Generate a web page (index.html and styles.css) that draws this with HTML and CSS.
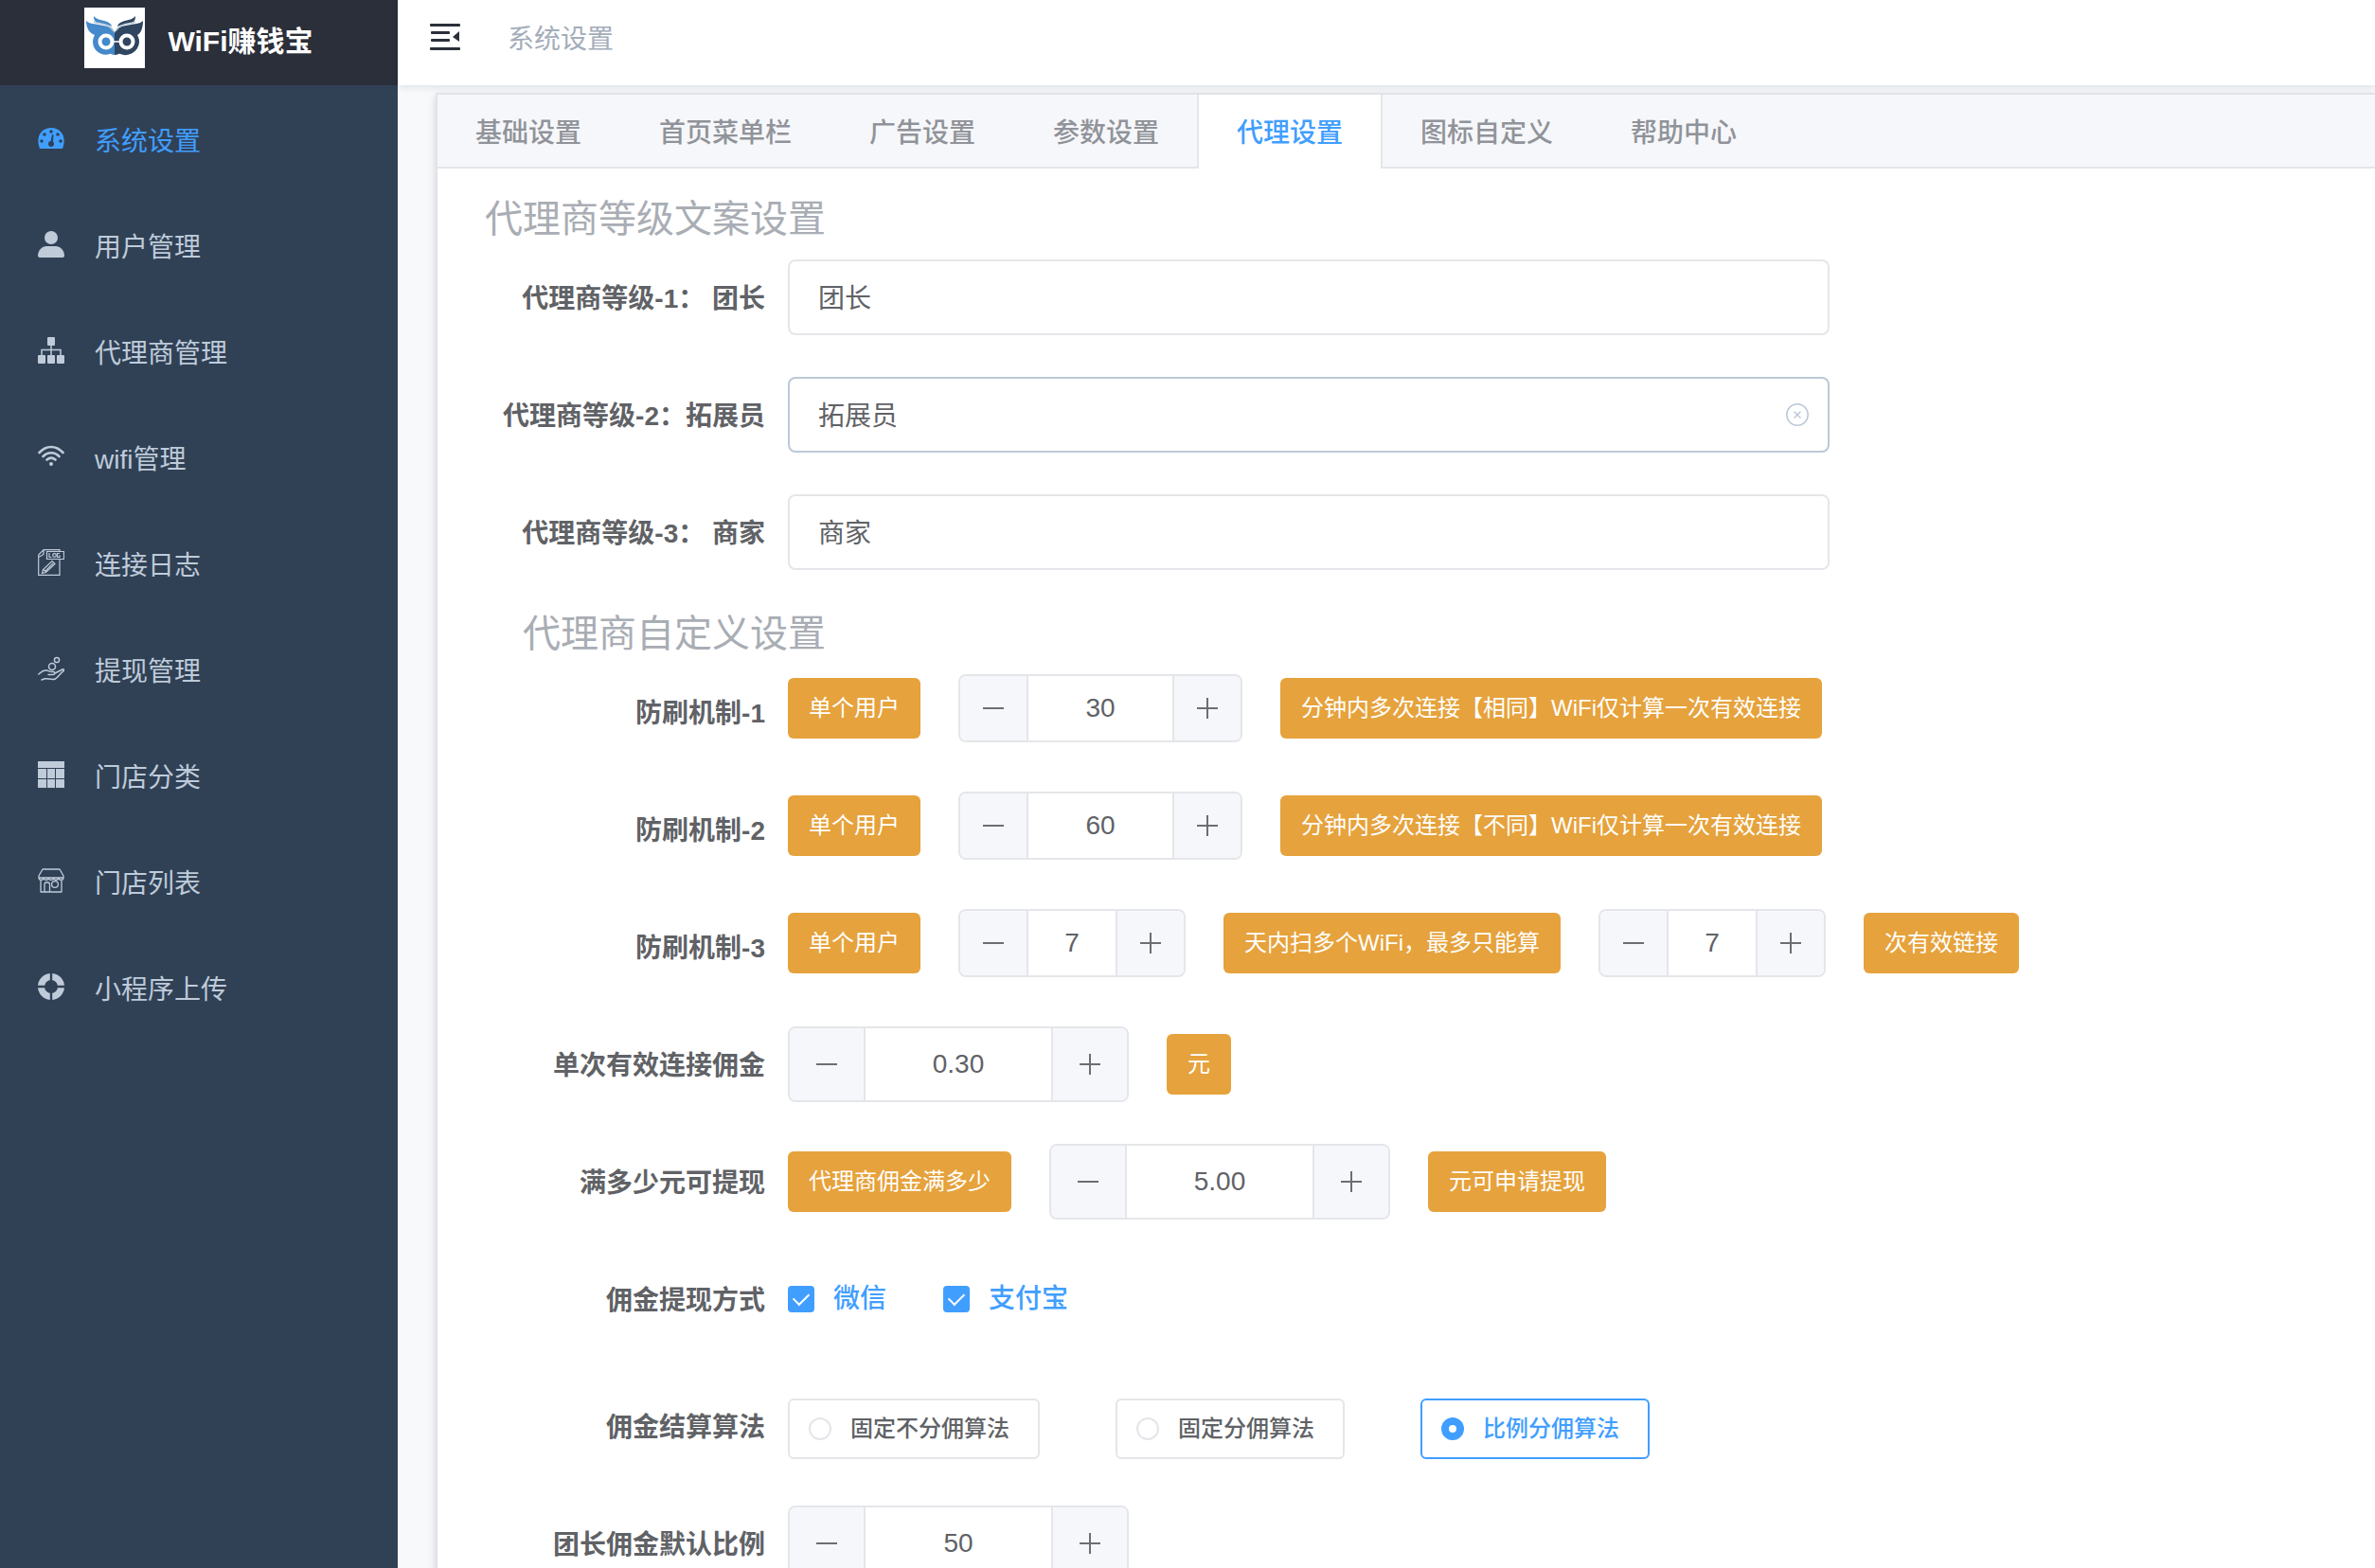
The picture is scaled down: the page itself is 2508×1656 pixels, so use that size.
FILE: index.html
```html
<!DOCTYPE html>
<html lang="zh-CN">
<head>
<meta charset="utf-8">
<meta name="viewport" content="width=device-width, initial-scale=1">
<title>WiFi赚钱宝 - 系统设置</title>
<link rel="stylesheet" href="styles.css">
</head>
<body>
<div class="app">
  <aside class="sidebar">
    <div class="brand">
      <svg class="brand-logo" viewBox="0 0 64 64" aria-hidden="true">
        <rect width="64" height="64" fill="#fff"/>
        <path fill="#4489cb" d="M10 9c3 4 9 4 14 6 3 1 5 3 5 5-5-3-12-2-17-5-2-2-2-4-2-6z"/>
        <path fill="#4489cb" d="M2 14c4 4 11 3 18 5 7 1 11 4 12 8v23c-3 0-4-2-5-1-8 3-18-3-18-13 0-3 1-5 2-7C5 27 2 21 2 14z"/>
        <path fill="#2f4560" d="M54 9c-3 4-9 4-14 6-3 1-5 3-5 5 5-3 12-2 17-5 2-2 2-4 2-6z"/>
        <path fill="#2f4560" d="M62 14c-4 4-11 3-18 5-7 1-11 4-12 8v23c4 0 4-2 6-1 9 4 20-3 20-13 0-3-1-5-2-7 4-2 6-8 6-15z"/>
        <path fill="none" stroke="#b9c6d4" stroke-width="1.5" d="M10 15c7 3 16 1 21 10M54 15c-7 3-16 1-21 10"/>
        <circle cx="23" cy="36" r="6.500" fill="#4489cb" stroke="#fff" stroke-width="4"/>
        <circle cx="45" cy="36" r="6.500" fill="#2f4560" stroke="#fff" stroke-width="4"/>
        <path d="M31 36h6" stroke="#fff" stroke-width="1.500"/>
      </svg>
      <span class="brand-name">WiFi赚钱宝</span>
    </div>
    <nav class="menu">
      <a class="menu-item active" href="#">
        <svg class="icon" viewBox="0 0 28 28" aria-hidden="true"><path fill="currentColor" d="M2 25C-3 12 4 3 14 3s17 9 12 22z"/><g fill="#304156"><circle cx="4" cy="17" r="1.800"/><circle cx="7" cy="10" r="1.800"/><circle cx="14" cy="7" r="1.800"/><circle cx="21" cy="10" r="1.800"/><circle cx="24" cy="17" r="1.800"/><circle cx="14" cy="20" r="3"/><path d="M13 20l2-10 1.500.4-.7 10z"/></g></svg>
        <span class="menu-text">系统设置</span></a>
      <a class="menu-item" href="#">
        <svg class="icon" viewBox="0 0 28 28" fill="currentColor" aria-hidden="true"><circle cx="14" cy="7" r="7"/><path d="M0 26c0-6 5-10 9-10h10c4 0 9 4 9 10q0 2-2 2H2q-2 0-2-2z"/></svg>
        <span class="menu-text">用户管理</span></a>
      <a class="menu-item" href="#">
        <svg class="icon" viewBox="0 0 28 28" fill="currentColor" aria-hidden="true"><rect x="10" width="8" height="9" rx="1"/><rect y="19" width="8" height="9" rx="1"/><rect x="10" y="19" width="8" height="9" rx="1"/><rect x="20" y="19" width="8" height="9" rx="1"/><path fill="none" stroke="currentColor" stroke-width="1.500" d="M14 9v10M4 19v-5.500h20V19"/></svg>
        <span class="menu-text">代理商管理</span></a>
      <a class="menu-item" href="#">
        <svg class="icon" viewBox="0 0 28 28" fill="none" stroke="currentColor" stroke-width="2.600" stroke-linecap="round" aria-hidden="true"><path d="M1.500 10C9 2 19 2 26.500 10M5.500 14c5-5 12-5 17 0M9.500 17.500c3-2.500 6-2.500 9 0"/><circle cx="14" cy="22" r="2" fill="currentColor" stroke="none"/></svg>
        <span class="menu-text">wifi管理</span></a>
      <a class="menu-item" href="#">
        <svg class="icon" viewBox="0 0 28 28" fill="none" stroke="currentColor" stroke-width="1.200" aria-hidden="true"><path d="M23 11v16.300H.7V6L6 .7h17V2M.7 8.500L6 5.500V.7M9.500 2.500h18v8h-18zM12 4v4.500h2.500M23 4.500h-2.500v4H23V7h-1"/><circle cx="17.500" cy="6.500" r="1.800"/><path d="M4.500 25.500l1-4L15 12.500l3 3-9.500 9zM6 21.500l3 3M8 23l8-8"/></svg>
        <span class="menu-text">连接日志</span></a>
      <a class="menu-item" href="#">
        <svg class="icon" viewBox="0 0 28 28" fill="none" stroke="currentColor" stroke-width="1.500" stroke-linecap="round" stroke-linejoin="round" aria-hidden="true"><circle cx="20" cy="5" r="2.600"/><circle cx="15" cy="12" r="3.500"/><path d="M.8 20C4 17 6 15.500 9 16c3 .5 4 2 7.500 1.500 2 0 2 3-.5 3h-5M18 19l8-4c1.500-.5 2 .8 1 1.600-3 2.400-5 5.400-8.500 8.400-4 1.500-8-.8-11-.3L4 26"/></svg>
        <span class="menu-text">提现管理</span></a>
      <a class="menu-item" href="#">
        <svg class="icon" viewBox="0 0 28 28" fill="currentColor" aria-hidden="true"><path d="M0 0h28v7H0zM0 8h9v10H0zM10 8h8v10h-8zM19 8h9v10h-9zM0 19h9v9H0zM10 19h8v9h-8zM19 19h9v9h-9z"/></svg>
        <span class="menu-text">门店分类</span></a>
      <a class="menu-item" href="#">
        <svg class="icon" viewBox="0 0 28 28" fill="none" stroke="currentColor" stroke-width="1.300" stroke-linejoin="round" aria-hidden="true"><path d="M5 2h18l4 7v2H1V9zM1 11c0 3 5 3 5.200 0 .2 3 5 3 5.200 0 .2 3 5 3 5.200 0 .2 3 5 3 5.200 0 .2 3 5.200 3 5.200 0M3 13v13h22V13M7 26v-8c0-3 5.500-3 5.500 0v8"/><circle cx="18" cy="18" r="3.400"/></svg>
        <span class="menu-text">门店列表</span></a>
      <a class="menu-item" href="#">
        <svg class="icon" viewBox="0 0 28 28" fill="none" stroke="currentColor" aria-hidden="true"><circle cx="14" cy="14" r="10.500" stroke-width="7"/><path stroke="#304156" stroke-width="2.400" d="M14 0v28M0 14h28"/></svg>
        <span class="menu-text">小程序上传</span></a>
    </nav>
  </aside>

  <div class="page">
    <header class="topbar">
      <button class="collapse" type="button" aria-label="收起菜单">
        <svg class="collapse-icon" viewBox="0 0 32 28" fill="#2b2f3a" aria-hidden="true"><rect width="32" height="3" rx="1"/><rect x="1" y="8" width="20" height="3" rx="1"/><rect x="1" y="16" width="20" height="3" rx="1"/><rect y="25" width="32" height="3" rx="1"/><path d="M24 14l7-6v11z"/></svg>
      </button>
      <span class="crumb">系统设置</span>
    </header>

    <main class="main">
      <section class="card">
        <nav class="tabs">
          <a class="tab" href="#">基础设置</a>
          <a class="tab" href="#">首页菜单栏</a>
          <a class="tab" href="#">广告设置</a>
          <a class="tab" href="#">参数设置</a>
          <a class="tab active" href="#">代理设置</a>
          <a class="tab" href="#">图标自定义</a>
          <a class="tab" href="#">帮助中心</a>
        </nav>

        <form class="form">
          <h2 class="section-title">代理商等级文案设置</h2>
          <div class="row">
            <label class="label" for="level1">代理商等级-1： 团长</label>
            <div class="text-field"><input id="level1" type="text" value="团长"></div>
          </div>
          <div class="row">
            <label class="label" for="level2">代理商等级-2：拓展员</label>
            <div class="text-field hover"><input id="level2" type="text" value="拓展员">
              <button class="clear" type="button" aria-label="清空"><svg class="clear-icon" viewBox="0 0 24 24" fill="none" stroke="currentColor" stroke-width="1.500" aria-hidden="true"><circle cx="12" cy="12" r="11.200"/><path d="M8.500 8.500l7 7M15.500 8.500l-7 7"/></svg></button></div>
          </div>
          <div class="row last">
            <label class="label" for="level3">代理商等级-3： 商家</label>
            <div class="text-field"><input id="level3" type="text" value="商家"></div>
          </div>

          <h2 class="section-title">代理商自定义设置</h2>
          <div class="row">
            <label class="label" for="guard1">防刷机制-1</label>
            <div class="controls compact">
              <button class="tag" type="button">单个用户</button>
              <div class="stepper small"><button type="button" aria-label="减少"><i class="minus"></i></button><input id="guard1" type="text" value="30"><button type="button" aria-label="增加"><i class="plus"></i></button></div>
              <button class="tag" type="button">分钟内多次连接【相同】WiFi仅计算一次有效连接</button>
            </div>
          </div>
          <div class="row">
            <label class="label" for="guard2">防刷机制-2</label>
            <div class="controls compact">
              <button class="tag" type="button">单个用户</button>
              <div class="stepper small"><button type="button" aria-label="减少"><i class="minus"></i></button><input id="guard2" type="text" value="60"><button type="button" aria-label="增加"><i class="plus"></i></button></div>
              <button class="tag" type="button">分钟内多次连接【不同】WiFi仅计算一次有效连接</button>
            </div>
          </div>
          <div class="row">
            <label class="label" for="guard3">防刷机制-3</label>
            <div class="controls compact">
              <button class="tag" type="button">单个用户</button>
              <div class="stepper small narrow"><button type="button" aria-label="减少"><i class="minus"></i></button><input id="guard3" type="text" value="7"><button type="button" aria-label="增加"><i class="plus"></i></button></div>
              <button class="tag" type="button">天内扫多个WiFi，最多只能算</button>
              <div class="stepper small narrow"><button type="button" aria-label="减少"><i class="minus"></i></button><input type="text" value="7" aria-label="有效链接次数"><button type="button" aria-label="增加"><i class="plus"></i></button></div>
              <button class="tag" type="button">次有效链接</button>
            </div>
          </div>
          <div class="row">
            <label class="label" for="commission">单次有效连接佣金</label>
            <div class="controls">
              <div class="stepper"><button type="button" aria-label="减少"><i class="minus"></i></button><input id="commission" type="text" value="0.30"><button type="button" aria-label="增加"><i class="plus"></i></button></div>
              <button class="tag" type="button">元</button>
            </div>
          </div>
          <div class="row">
            <label class="label" for="threshold">满多少元可提现</label>
            <div class="controls">
              <button class="tag" type="button">代理商佣金满多少</button>
              <div class="stepper"><button type="button" aria-label="减少"><i class="minus"></i></button><input id="threshold" type="text" value="5.00"><button type="button" aria-label="增加"><i class="plus"></i></button></div>
              <button class="tag" type="button">元可申请提现</button>
            </div>
          </div>
          <div class="row checks-row" role="group" aria-labelledby="methods">
            <span class="label" id="methods">佣金提现方式</span>
            <div class="controls checks">
              <label class="check"><input type="checkbox" checked>微信</label>
              <label class="check"><input type="checkbox" checked>支付宝</label>
            </div>
          </div>
          <div class="row" role="radiogroup" aria-labelledby="algorithm">
            <span class="label" id="algorithm">佣金结算算法</span>
            <div class="controls radios">
              <label class="radio"><input type="radio" name="algorithm">固定不分佣算法</label>
              <label class="radio"><input type="radio" name="algorithm">固定分佣算法</label>
              <label class="radio"><input type="radio" name="algorithm" checked>比例分佣算法</label>
            </div>
          </div>
          <div class="row">
            <label class="label" for="ratio">团长佣金默认比例</label>
            <div class="controls">
              <div class="stepper"><button type="button" aria-label="减少"><i class="minus"></i></button><input id="ratio" type="text" value="50"><button type="button" aria-label="增加"><i class="plus"></i></button></div>
            </div>
          </div>
        </form>
      </section>
    </main>
  </div>
</div>
</body>
</html>
```
FILE: styles.css
```css
* { box-sizing: border-box; }

body {
  margin: 0;
  font: 28px/1.4 "Liberation Sans", "Noto Sans CJK SC", sans-serif;
  color: #606266;
  background: #f7f9fb;
}

button, input { font: inherit; color: inherit; margin: 0; }
button { cursor: pointer; }
a { color: inherit; text-decoration: none; }
svg { display: block; }

.app { display: flex; height: 100vh; }

/* sidebar */
.sidebar { flex: none; width: 420px; background: #304156; color: #bfcbd9; }
.brand {
  display: flex;
  justify-content: center;
  gap: 24px;
  height: 90px;
  padding-top: 8px;
  background: #2b2f3a;
}
.brand-logo { width: 64px; height: 64px; }
.brand-name { color: #fff; font-size: 30px; font-weight: 700; line-height: 72px; }
.menu { padding-top: 2px; }
.menu-item { display: flex; align-items: center; gap: 32px; height: 112px; padding: 0 40px; }
.menu-item.active { color: #409eff; }
.menu-text { padding-top: 4px; }
.icon { width: 28px; height: 28px; margin-bottom: 4px; flex: none; }

/* top bar */
.page { flex: 1; min-width: 0; display: flex; flex-direction: column; }
.topbar {
  position: relative;
  z-index: 1;
  flex: none;
  display: flex;
  gap: 50px;
  height: 90px;
  padding: 0 34px;
  background: #fff;
  box-shadow: 0 2px 8px rgba(0, 21, 41, .1);
}
.collapse { height: 78px; padding: 0; border: 0; background: none; }
.collapse-icon { width: 32px; height: 28px; }
.crumb { line-height: 84px; color: #a4adba; }

/* card with tabs */
.main { flex: 1; min-height: 0; overflow: auto; scrollbar-width: none; padding: 8px 0 0 40px; }
.card {
  background: #fff;
  border: 2px solid #e1e3e6;
  border-right: 0;
  box-shadow: 0 4px 8px rgba(0, 0, 0, .12), 0 0 12px rgba(0, 0, 0, .04);
}
.tabs { display: flex; background: #f6f7fa; border-bottom: 2px solid #e4e6e9; }
.tab {
  height: 78px;
  margin-bottom: -2px;
  padding: 0 40px;
  border-right: 2px solid transparent;
  line-height: 82px;
  font-weight: 500;
  color: #909399;
}
.tab.active {
  margin-left: -2px;
  border-left: 2px solid #e4e6e9;
  border-right-color: #e4e6e9;
  background: #fff;
  color: #409eff;
}

/* form */
.form { padding: 10px 50px 40px; }
.section-title {
  width: 360px;
  margin: 0;
  line-height: 86px;
  font-size: 40px;
  font-weight: 400;
  color: #a9adb4;
  text-align: right;
}
.row { display: flex; gap: 24px; margin-bottom: 44px; min-height: 80px; }
.row.last { margin-bottom: 24px; }
.checks-row { min-height: 90px; }
.label { flex: none; width: 296px; height: 80px; line-height: 84px; font-weight: 700; text-align: right; white-space: nowrap; }

.text-field {
  display: flex;
  align-items: center;
  flex: 0 1 1100px;
  height: 80px;
  padding: 0 20px 0 30px;
  border: 2px solid #e4e6e9;
  border-radius: 8px;
  background: #fff;
}
.text-field.hover { border-color: #bcc8d6; }
.text-field input { flex: 1; min-width: 0; height: 76px; padding: 0 0 2px; border: 0; outline: 0; background: none; }
.clear { padding: 0; border: 0; background: none; color: #bcc8d6; }
.clear-icon { width: 24px; height: 24px; }

.controls { display: flex; align-items: center; gap: 40px; height: 80px; }
.controls.compact { height: 72px; }
.tag {
  height: 64px;
  padding: 0 22px;
  border: 0;
  border-radius: 6px;
  background: #e6a23c;
  color: #fff;
  font-size: 24px;
  white-space: nowrap;
}

.stepper {
  display: flex;
  width: 360px;
  height: 80px;
  border: 2px solid #e4e6e9;
  border-radius: 8px;
  overflow: hidden;
  background: #fff;
}
.stepper button {
  display: grid;
  place-items: center;
  flex: none;
  width: 80px;
  padding: 0;
  border: 0;
  background: #f5f7fa;
}
.stepper button:first-child { border-right: 2px solid #e4e6e9; }
.stepper button:last-child { border-left: 2px solid #e4e6e9; }
.stepper input { flex: 1; min-width: 0; padding: 0; border: 0; outline: 0; text-align: center; }
.stepper.small { width: 300px; height: 72px; }
.stepper.small button { width: 72px; }
.stepper.small.narrow { width: 240px; }
.minus, .plus { display: grid; width: 22px; height: 22px; }
.minus::before, .plus::before, .plus::after { content: ""; grid-area: 1 / 1; place-self: center; background: #6b6e73; }
.minus::before, .plus::before { width: 22px; height: 2px; }
.plus::after { width: 2px; height: 22px; }

.checks { gap: 60px; }
.check { display: flex; align-items: center; gap: 20px; color: #409eff; font-weight: 500; }
.check input {
  display: grid;
  place-items: center;
  appearance: none;
  width: 28px;
  height: 28px;
  border: 2px solid #409eff;
  border-radius: 4px;
  background: #fff;
}
.check input:checked { background: #409eff; }
.check input:checked::after {
  content: "";
  width: 8px;
  height: 14px;
  margin-bottom: 4px;
  border: solid #fff;
  border-width: 0 2px 2px 0;
  transform: rotate(45deg);
}

.radios { gap: 80px; padding-top: 6px; height: 80px; }
.radio {
  display: flex;
  align-items: center;
  gap: 20px;
  height: 64px;
  padding: 0 30px 0 20px;
  border: 2px solid #e4e6e9;
  border-radius: 6px;
  font-size: 24px;
  font-weight: 500;
  white-space: nowrap;
}
.radio input {
  appearance: none;
  width: 24px;
  height: 24px;
  border: 2px solid #e4e6e9;
  border-radius: 50%;
  background: #fff;
}
.radio input:checked { border: 8px solid #409eff; }
.radio:has(input:checked) { border-color: #409eff; color: #409eff; }
```
